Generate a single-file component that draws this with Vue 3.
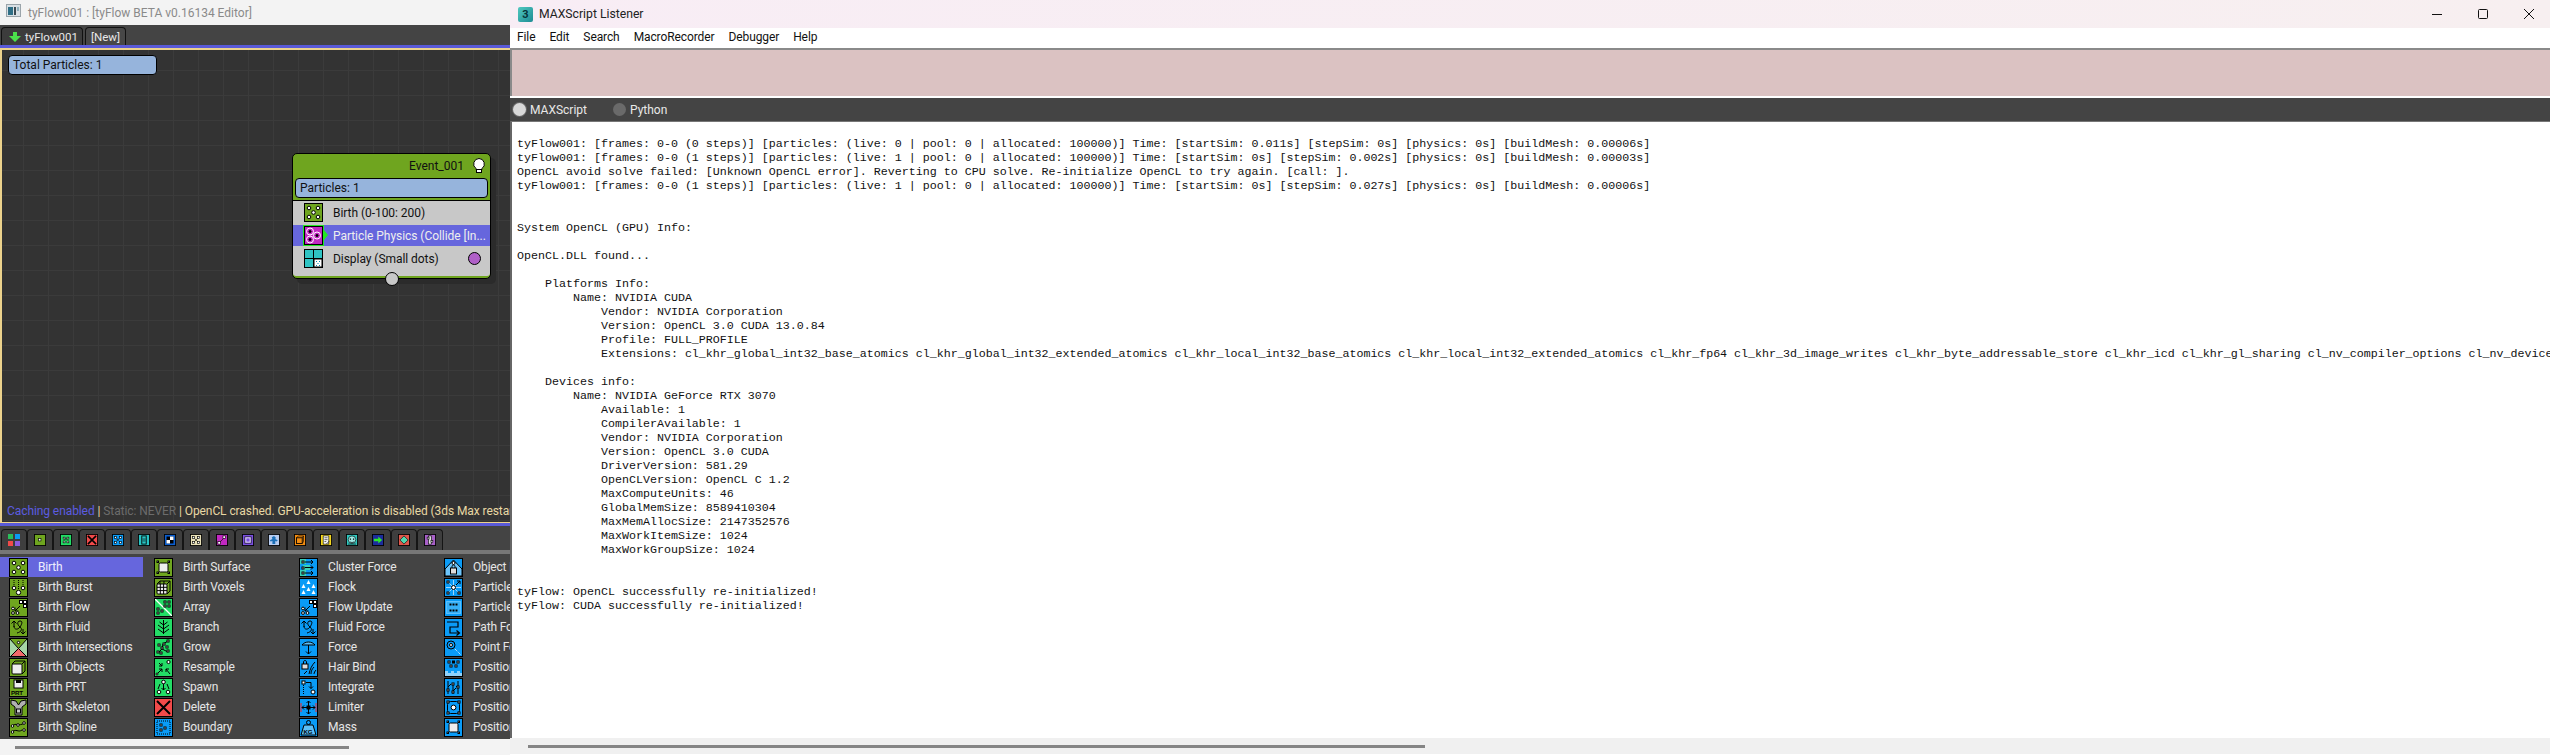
<script setup>
const o = (x, y, r = 1.8, f = '#fff') => `<circle cx="${x}" cy="${y}" r="${r}" fill="${f}" stroke="#000"/>`
const sq = (x, y, s = 3, f = '#fff') => `<rect x="${x}" y="${y}" width="${s}" height="${s}" fill="${f}" stroke="#000"/>`
const ln = (d, c = '#000', w = 1) => `<path d="${d}" fill="none" stroke="${c}" stroke-width="${w}"/>`
const fl = (d, c = '#000') => `<path d="${d}" fill="${c}"/>`
const tx = (x, y, t, c = '#000', s = 6) => `<text x="${x}" y="${y}" font-size="${s}" font-weight="700" font-family="Liberation Sans, sans-serif" fill="${c}">${t}</text>`

const G = '#6fa51f', E = '#23dc66', B = '#0a9bf6', W = '#fff'
const flowMark = sq(10.5, 2.5) + sq(14.5, 2.5) + sq(14.5, 6.5) + ln('M11 8L6 13M6 9.5V13H9.5') + o(4, 10.5, 1.4) + o(4, 15, 1.4) + o(8.5, 15, 1.4)
const fluidMark = ln('M5 3V9M2.5 5.5L5 3l2.5 2.5M14 16v-5M11.5 13.5L14 16l2.5-2.5') + ln('M5 8c0 4 4 4 6 1s3-6 0-6-3 4 0 6 1 5-3 6', '#000', 1)
const cube = `<rect x="3" y="6" width="10" height="10" rx="1" fill="#eee" stroke="#000"/>` + ln('M3 6l3-3h10v10l-3 3M13 6l3-3', '#000')
const surface = sq(3, 3, 1.5) + sq(14, 3, 1.5) + sq(3, 14, 1.5) + sq(14, 14, 1.5) + `<rect x="5" y="5" width="9" height="9" rx="1.5" fill="#eee" stroke="#000"/>`

const frame = (bg, body) => `<rect x=".5" y=".5" width="18" height="18" fill="${bg}" stroke="#000"/>${body}<rect x=".5" y=".5" width="18" height="18" fill="none" stroke="#000"/>`

const columns = [
  [
    ['Birth', frame(G, o(5, 5) + o(14, 5) + o(9.5, 9.5) + o(5, 14) + o(14, 14))],
    ['Birth Burst', frame(G, ln('M5 2v6M9.5 2v9M14 2v6', '#000', 1).replace('<path', '<path stroke-dasharray="1 1"') + o(5, 10) + o(14, 10) + o(9.5, 14.5, 2.2))],
    ['Birth Flow', frame(G, flowMark)],
    ['Birth Fluid', frame(G, fluidMark)],
    ['Birth Intersections', frame('#a6d6a6', fl('M1 1h17L9.5 10z', G) + fl('M9.5 10L17 18H2z', '#f26a6a') + ln('M1 1l8.5 9.5L18 1M2 18l7.5-7.5L17 18') + o(9.5, 4.5, 1.2))],
    ['Birth Objects', frame(G, cube)],
    ['Birth PRT', frame(G, `<rect x="5" y="2" width="9" height="8" fill="#eee" stroke="#000"/><rect x="7" y="2" width="5" height="3" fill="#000"/>` + tx(2, 17, 'PRT', '#000', 6.2))],
    ['Birth Skeleton', frame(G, `<path d="M2 2l5 1 2.5 4 2.5-4 5-1v4l-4 3v8H6V9L2 6z" fill="#b0b0b0" stroke="#000"/>` + sq(7.5, 11, 4, '#ccc'))],
    ['Birth Spline', frame(G, ln('M3 14c4-4 6 1 10-2M3 8c4-4 6 1 13-3') + o(3.5, 8, 1.3) + o(15, 5, 1.3) + o(9, 7, 1.3) + o(3.5, 14, 1.3) + o(15, 12, 1.3))]
  ],
  [
    ['Birth Surface', frame(G, surface)],
    ['Birth Voxels', frame(G, cube + ln('M3 9.3h10M3 12.6h10M6.3 6v10M9.6 6v10M6 3l-.1 3M10 3l-.1 3'))],
    ['Array', frame(E, ln('M1 1l17 17', W, 1.2) + sq(10, 3, 2) + sq(14, 3, 2) + sq(14, 7, 2) + sq(10, 7, 2) + sq(3, 10, 2) + sq(7, 12, 2) + sq(3, 14, 2))],
    ['Branch', frame(E, ln('M9.5 2v14M9.5 7l-4-3M9.5 7l4-3M9.5 11L4 7M9.5 11l5.5-4M9.5 15L4 11M9.5 15l5.5-4'))],
    ['Grow', frame(E, ln('M4 15l4-4 1-5 5-3M8 11l6 3', '#000') + sq(3, 13, 2) + sq(7, 9, 2) + sq(9, 5, 2) + sq(13, 2, 2) + sq(13, 12, 2) + sq(12, 8, 2) + sq(6, 14, 2) + sq(4, 6, 2))],
    ['Resample', frame(E, ln('M3 16L8 11M8 11H5M8 11v3M16 16l-4-5M12 11h3M12 11v3M5 5l3 3M8 5v3H5') + o(14.5, 4, 1.6) + o(3, 16, 1))],
    ['Spawn', frame(E, ln('M6 6l-2 5M13 6l2 5M9.5 3v9M7.5 10l2 2 2-2') + o(9.5, 4) + o(5, 14) + o(14, 14))],
    ['Delete', frame('#f24a4a', ln('M3 3l13 13M16 3L3 16', '#000', 2))],
    ['Boundary', frame(B, `<rect x="3" y="3" width="13" height="13" fill="none" stroke="#000" stroke-dasharray="1 1"/>` + sq(6, 6, 2) + sq(10, 9, 2) + sq(6, 11, 2))]
  ],
  [
    ['Cluster Force', frame(B, fl('M1 1h6v5H1zM1 12h6v6H1z', '#3ad0b8') + fl('M4 7h7v5H4z', '#3ad0b8') + ln('M6 4h8M12 2l2 2-2 2M6 9.5h8M12 7.5l2 2-2 2M6 15h8M12 13l2 2-2 2') + sq(3, 3, 2) + sq(3, 9, 2) + sq(3, 14, 2))],
    ['Flock', frame(B, fl('M9.5 2l2 4h-4zM4.5 6l2 4h-4zM14.5 6l2 4h-4zM9.5 9l2 4h-4zM4.5 12l2 4h-4zM14.5 12l2 4h-4z', W))],
    ['Flow Update', frame(B, flowMark)],
    ['Fluid Force', frame(B, fluidMark)],
    ['Force', frame(B, ln('M9.5 5v11M7 13.5l2.5 2.5 2.5-2.5') + `<path d="M3 7c3-4 10-4 13 0z" fill="#5cc0f8" stroke="#000"/>`)],
    ['Hair Bind', frame(B, `<rect x="3" y="6" width="6" height="5" fill="#ddd" stroke="#000"/>` + ln('M4.5 6V4c0-2 3-2 3 0v2M16 4c-3 3-5 7-6 12M15 9c-2 2-3 4-3 7M17 12c-1 1-2 3-2 4M5 16l3-3'))],
    ['Integrate', frame(B, sq(3, 3, 3) + o(14, 14, 2) + ln('M7 4.5h5v6M10 8.5l2 2 2-2') + `<path d="M4.5 7v10" stroke="#000" stroke-dasharray="1 1"/>`)],
    ['Limiter', frame(B, ln('M2 5v9M17 5v9', '#f22', 1) + ln('M9.5 3v13M3 9.5h13M7.5 5l2-2 2 2M7.5 14l2 2 2-2M5 7.5l-2 2 2 2M14 7.5l2 2-2 2') + sq(8, 8, 3, '#000'))],
    ['Mass', frame(B, `<path d="M5 7h9l3 10H2z" fill="#5cc0f8" stroke="#000"/><circle cx="9.5" cy="4.5" r="2" fill="none" stroke="#000"/>` + tx(4.5, 15.5, 'KG', '#000', 6.2))]
  ],
  [
    ['Object Bind', frame(B, `<path d="M9.5 2L18 11v7H1v-7z" fill="#6cc4fa" stroke="#000"/>` + o(9.5, 5, 1.5) + `<rect x="6.5" y="10" width="6" height="6" fill="#ddd" stroke="#000"/>` + ln('M8 10V8.5c0-2 3-2 3 0V10'))],
    ['Particle Bind', frame(B, ln('M3 3l13 13M16 3L3 16M9.5 2v15M2 9.5h15', '#fff', .6) + ln('M12 7l4-4M13 3h3v3') + o(9.5, 9.5, 2) + sq(3, 3, 2) + sq(3, 14, 2) + sq(14, 14, 2))],
    ['Particle Break', frame(B, `<rect x="2.5" y="3.5" width="14" height="12" fill="#36b0f8" stroke="#9ad8ff" stroke-dasharray="1 1"/>` + sq(6, 6, 1) + sq(9, 6, 1) + sq(12, 6, 1) + sq(6, 12, 1) + sq(9, 12, 1) + sq(12, 12, 1))],
    ['Path Follow', frame(B, ln('M3 4h11v5H6v6h9M12.5 12.5l3 2.5-3 2.5', '#000', 1.2))],
    ['Point Force', frame(B, o(7, 7, 4, B) + o(7, 7, 1.5) + `<path d="M11 11l6 6" stroke="#fff" stroke-dasharray="1 1"/>`)],
    ['Position Icon', frame(B, sq(4, 3, 2) + sq(8.5, 3, 2) + sq(13, 3, 2) + sq(6, 7, 2) + sq(11, 7, 2) + `<path d="M1 13h3v2h3v-2h3v2h3v-2h3v2h2v3H1z" fill="#fff" opacity=".55"/>`)],
    ['Position Object', frame(B, ln('M4 16V3M9 16V7M14 16V3M4 9l3-3M9 13l3-3M14 10l-2-2') + sq(3, 11, 2) + sq(8, 5, 2) + sq(13, 8, 2) + sq(8, 13, 2))],
    ['Position Raycast', frame(B, `<rect x="3.5" y="3.5" width="12" height="12" rx="3" fill="none" stroke="#000"/>` + o(9.5, 9.5, 2.4) + sq(3, 3, 2) + sq(14, 3, 2) + sq(3, 14, 2) + sq(14, 14, 2))],
    ['Position Transfer', frame(B, surface)]
  ]
]
const rows = columns.flat()

const tabIcons = [
  { bare: true, inner: `<rect x="0" y="0" width="5" height="5" fill="#2bbf5b"/><rect x="7" y="0" width="5" height="5" fill="#0a9bf6"/><rect x="0" y="7" width="5" height="5" fill="#f24a4a"/><rect x="7" y="7" width="5" height="5" fill="#8a5ce0"/>` },
  { inner: frame(G, sq(7, 7, 4)) },
  { inner: frame(E, sq(5, 5, 3) + sq(11, 5, 3) + sq(5, 11, 3) + sq(11, 11, 3) + ln('M7 8h5')) },
  { inner: frame('#f24a4a', ln('M3 3l13 13M16 3L3 16', '#000', 2.5)) },
  { inner: frame(B, sq(4, 4, 3) + sq(12, 4, 3) + sq(4, 12, 3) + sq(12, 12, 3) + sq(8, 8, 2)) },
  { inner: frame('#29c4c4', `<rect x="6" y="3" width="7" height="13" fill="none" stroke="#000" stroke-width="1.4"/>` + ln('M7 8h5M7 11h5')) },
  { inner: frame('#0a5ed0', `<rect x="4" y="4" width="11" height="11" fill="#000"/><rect x="9.5" y="4" width="5.5" height="5.5" fill="#fff"/><rect x="4" y="9.5" width="5.5" height="5.5" fill="#fff"/>`) },
  { inner: frame('#e8e0b8', ln('M5 5l9 9M14 5l-9 9') + sq(4, 4, 3) + sq(12, 4, 3) + sq(4, 12, 3) + sq(12, 12, 3)) },
  { inner: frame('#c228c2', ln('M5 14L14 5', '#000') + sq(3, 12, 4) + sq(11, 3, 4)) },
  { inner: frame('#7a4fe0', `<rect x="4.5" y="4.5" width="10" height="10" fill="#d8c8ff" stroke="#000"/><rect x="7" y="7" width="5" height="5" fill="#7a4fe0"/>`) },
  { inner: frame('#b8ccf0', `<path d="M9.5 3l3 3-1 2 4 2-2 2-2-1v5H7v-5l-3 1-1-2 4-2-1-3z" fill="#1d70b8"/>`) },
  { inner: frame('#f28c10', `<rect x="4" y="6" width="9" height="9" fill="none" stroke="#000" stroke-width="1.4"/>` + ln('M4 6l3-3h8v9l-2 3M13 6l2-3')) },
  { inner: frame('#f5d820', `<rect x="5" y="3" width="9" height="13" fill="#fff" stroke="#000"/>` + ln('M7 6h5M7 9h5M7 12h3M10 16l5-5')) },
  { inner: frame('#30c8c0', `<circle cx="9.5" cy="9" r="6" fill="#a0ece8" stroke="#000"/>` + fl('M6 7h2v2H6zM11 7h2v2h-2z') + ln('M6 12c2 2 5 2 7 0M3 16h13')) },
  { inner: frame('#1c2c9c', fl('M3 7.5h7V4l6 5.5-6 5.5v-3.5H3z', '#2ee82e')) },
  { inner: frame('#e0584c', `<path d="M9.5 3l6.5 6.5-6.5 6.5-6.5-6.5z" fill="#50d8b0" stroke="#000"/>`) },
  { inner: frame('#a860c8', `<rect x="7" y="3" width="5" height="13" fill="#ddd" stroke="#000"/>` + sq(5, 5, 3) + sq(11, 10, 3)) }
]

const ext = 'cl_khr_global_int32_base_atomics cl_khr_global_int32_extended_atomics cl_khr_local_int32_base_atomics cl_khr_local_int32_extended_atomics cl_khr_fp64 cl_khr_3d_image_writes cl_khr_byte_addressable_store cl_khr_icd cl_khr_gl_sharing cl_nv_compiler_options cl_nv_device_attribute_query'

const log = [
  'tyFlow001: [frames: 0-0 (0 steps)] [particles: (live: 0 | pool: 0 | allocated: 100000)] Time: [startSim: 0.011s] [stepSim: 0s] [physics: 0s] [buildMesh: 0.00006s]',
  'tyFlow001: [frames: 0-0 (1 steps)] [particles: (live: 1 | pool: 0 | allocated: 100000)] Time: [startSim: 0s] [stepSim: 0.002s] [physics: 0s] [buildMesh: 0.00003s]',
  'OpenCL avoid solve failed: [Unknown OpenCL error]. Reverting to CPU solve. Re-initialize OpenCL to try again. [call: ].',
  'tyFlow001: [frames: 0-0 (1 steps)] [particles: (live: 1 | pool: 0 | allocated: 100000)] Time: [startSim: 0s] [stepSim: 0.027s] [physics: 0s] [buildMesh: 0.00006s]',
  '', '',
  'System OpenCL (GPU) Info:',
  '',
  'OpenCL.DLL found...',
  '',
  '    Platforms Info:',
  '        Name: NVIDIA CUDA',
  '            Vendor: NVIDIA Corporation',
  '            Version: OpenCL 3.0 CUDA 13.0.84',
  '            Profile: FULL_PROFILE',
  '            Extensions: ' + ext,
  '',
  '    Devices info:',
  '        Name: NVIDIA GeForce RTX 3070',
  '            Available: 1',
  '            CompilerAvailable: 1',
  '            Vendor: NVIDIA Corporation',
  '            Version: OpenCL 3.0 CUDA',
  '            DriverVersion: 581.29',
  '            OpenCLVersion: OpenCL C 1.2',
  '            MaxComputeUnits: 46',
  '            GlobalMemSize: 8589410304',
  '            MaxMemAllocSize: 2147352576',
  '            MaxWorkItemSize: 1024',
  '            MaxWorkGroupSize: 1024',
  '', '',
  'tyFlow: OpenCL successfully re-initialized!',
  'tyFlow: CUDA successfully re-initialized!'
].join('\n')

const menus = ['File', 'Edit', 'Search', 'MacroRecorder', 'Debugger', 'Help']
const operators = [
  { name: 'Birth (0-100: 200)', inner: columns[0][0][1] },
  { name: 'Particle Physics (Collide [In...', selected: true, inner: frame('#c228c2', `<circle cx="6" cy="5.5" r="3.5" fill="none" stroke="#fff"/><circle cx="6" cy="13.5" r="3.5" fill="none" stroke="#fff"/><circle cx="13" cy="9.5" r="3.5" fill="none" stroke="#fff"/>` + o(6, 5.5, 1, '#000') + o(6, 13.5, 1, '#000') + o(13, 9.5, 1, '#000')) },
  { name: 'Display (Small dots)', dot: true, inner: frame('#2fc4c4', ln('M9.5 1v17M1 9.5h17') + `<rect x="10" y="10" width="8" height="8" fill="#fff" stroke="#000"/><rect x="12" y="12" width="1" height="1" fill="#08a"/><rect x="15" y="12" width="1" height="1" fill="#08a"/><rect x="13.5" y="14" width="1" height="1" fill="#08a"/><rect x="12" y="16" width="1" height="1" fill="#08a"/><rect x="15" y="16" width="1" height="1" fill="#08a"/>`) }
]
</script>

<template>
  <div class="desk">
    <section class="editor">
      <header class="etitle">
        <svg class="eicon" viewBox="0 0 15 13">
          <rect x=".5" y=".5" width="14" height="12" fill="#d8dfe4" stroke="#9aa4aa"/>
          <rect x="2" y="3" width="5" height="8" fill="#2f6f86"/>
          <rect x="8" y="3" width="2" height="8" fill="#3b4a52"/>
          <rect x="11" y="3" width="2" height="4" fill="#8fb0bc"/>
        </svg>
        <span>tyFlow001 : [tyFlow BETA v0.16134 Editor]</span>
      </header>

      <nav class="etabs">
        <div class="etab first">
          <svg class="arrow" viewBox="0 0 12 10"><path d="M4 0h4v4h4L6 10 0 4h4z" fill="#4be24b"/></svg>
          <span>tyFlow001</span>
        </div>
        <div class="etab second"><span>[New]</span></div>
      </nav>

      <div class="canvas">
        <div class="total">Total Particles: 1</div>

        <div class="node">
          <div class="nhead">
            <span class="ntitle">Event_001</span>
            <svg class="bulb" viewBox="0 0 12 15">
              <path d="M6 .5a5.5 5.5 0 0 1 3 10v1H3v-1a5.5 5.5 0 0 1 3-10z" fill="#fff" stroke="#000"/>
              <rect x="3.5" y="11.5" width="5" height="3" fill="#fff" stroke="#000"/>
            </svg>
          </div>
          <div class="nbar">Particles: 1</div>
          <div class="nrows">
            <div v-for="op in operators" :key="op.name" class="nrow" :class="{ sel: op.selected }">
              <svg class="nicon" viewBox="0 0 19 19" v-html="op.inner"></svg>
              <span class="nname">{{ op.name }}</span>
              <i v-if="op.selected" class="ntri"></i>
              <i v-if="op.dot" class="ndot"></i>
            </div>
          </div>
          <i class="nport"></i>
        </div>

        <div class="status"><span class="s1">Caching enabled</span> <span class="s2">|</span> <span class="s3">Static: NEVER</span> <span class="s4">| OpenCL crashed. GPU-acceleration is disabled (3ds Max restart required)</span></div>
      </div>

      <div class="tools">
        <div v-for="(t, i) in tabIcons" :key="i" class="tool">
          <svg class="ticon" :viewBox="t.bare ? '0 0 12 12' : '0 0 19 19'" v-html="t.inner"></svg>
        </div>
      </div>

      <div class="ops">
        <div v-for="(r, i) in rows" :key="r[0]" class="op" :class="{ on: i === 0 }">
          <svg class="oicon" viewBox="0 0 19 19" v-html="r[1]"></svg>
          <span class="oname">{{ r[0] }}</span>
        </div>
      </div>

      <div class="hbar left"><i></i></div>
    </section>

    <section class="listener">
      <header class="ltitle">
        <div class="lbrand">
          <span class="maxicon">3</span>
          <span>MAXScript Listener</span>
        </div>
        <div class="wbtns">
          <svg viewBox="0 0 12 12"><path d="M1 6.5h10" stroke="#111" fill="none"/></svg>
          <svg viewBox="0 0 12 12"><rect x="1.5" y="1.5" width="9" height="9" rx="1" fill="none" stroke="#111"/></svg>
          <svg viewBox="0 0 12 12"><path d="M1 1l10 10M11 1L1 11" stroke="#111" fill="none"/></svg>
        </div>
      </header>
      <nav class="menu"><span v-for="m in menus" :key="m">{{ m }}</span></nav>
      <div class="macro"></div>
      <div class="radios">
        <label class="radio"><i class="dot on"></i>MAXScript</label>
        <label class="radio"><i class="dot"></i>Python</label>
      </div>
      <pre class="log">{{ log }}</pre>
      <div class="hbar right"><i></i></div>
    </section>
  </div>
</template>

<style>
html, body { margin: 0; background: #fff; overflow: hidden; }
</style>

<style scoped>
.desk {
  display: flex;
  width: 2550px;
  height: 755px;
  overflow: hidden;
  font-family: Roboto, "Noto Sans", sans-serif;
  font-size: 12px;
}
i { display: block; }
svg { display: block; flex: none; }

/* editor */
.editor {
  width: 510px;
  flex: none;
  display: flex;
  flex-direction: column;
  overflow: hidden;
  background: #444;
}
.etitle {
  height: 25px;
  flex: none;
  background: #f3f3f3;
  color: #8a8a8a;
  display: flex;
  align-items: center;
  gap: 7px;
  padding-left: 6px;
  font-size: 12px;
}
.eicon { width: 15px; height: 13px; margin-bottom: 4px; }
.etabs {
  height: 20px;
  flex: none;
  display: flex;
  align-items: flex-end;
  gap: 2px;
  padding-left: 1px;
  background: #444;
  box-sizing: border-box;
  font-size: 11.5px;
}
.etab {
  height: 18px;
  box-sizing: border-box;
  border: 1px solid #111;
  border-bottom: 0;
  border-radius: 4px 4px 0 0;
  display: flex;
  align-items: center;
  color: #e8e8e8;
}
.etab.first { width: 82px; background: #3c3c3c; padding-left: 7px; gap: 4px; }
.etab.second { width: 41px; background: #474747; padding-left: 5px; }
.arrow { width: 12px; height: 10px; }
.canvas {
  height: 481px;
  flex: none;
  box-sizing: border-box;
  position: relative;
  border-top: 3px solid #5a5ad8;
  border-bottom: 3px solid #5a5ad8;
  background-color: #333;
  background-image:
    linear-gradient(#3b3b3b 1px, transparent 1px),
    linear-gradient(90deg, #3b3b3b 1px, transparent 1px);
  background-size: 25px 25px;
  background-position: 23px 22px;
  box-shadow: inset 2px 2px 0 #ecd28c, inset 0 -1px 0 #ecd28c;
  display: flex;
  flex-direction: column;
}
.total {
  margin: 7px 0 0 8px;
  width: 149px;
  height: 20px;
  box-sizing: border-box;
  background: #96b4dc;
  border: 1px solid #000;
  border-radius: 4px;
  color: #111;
  line-height: 18px;
  padding-left: 4px;
}
.node {
  position: absolute;
  left: 292px;
  top: 105px;
  width: 199px;
  height: 126px;
  box-sizing: border-box;
  background: #6fa51f;
  border: 1px solid #000;
  border-radius: 5px;
  box-shadow: 5px 5px 0 #2b2b2b;
  display: flex;
  flex-direction: column;
}
.nhead {
  height: 23px;
  flex: none;
  display: flex;
  align-items: center;
  justify-content: flex-end;
  gap: 9px;
  padding-right: 5px;
  color: #111;
}
.bulb { width: 12px; height: 15px; }
.nbar {
  height: 20px;
  flex: none;
  margin: 1px 2px 2px;
  box-sizing: border-box;
  background: #96b4dc;
  border: 1px solid #000;
  border-radius: 4px;
  color: #111;
  line-height: 18px;
  padding-left: 4px;
}
.nrows {
  flex: 1;
  background: #c8c8c8;
  border-top: 1px solid #000;
  border-radius: 0 0 3px 3px;
  padding-top: 1px;
  margin-bottom: 2px;
  color: #111;
}
.nrow {
  height: 21px;
  margin-bottom: 2px;
  display: flex;
  align-items: center;
  padding-left: 11px;
  gap: 10px;
  position: relative;
  letter-spacing: -.05px;
}
.nrow.sel { background: #6666dd; color: #eee; }
.nrow.sel .nicon { outline: 1px solid #22e822; }
.nicon { width: 19px; height: 19px; }
.nname { white-space: nowrap; }
.ntri {
  position: absolute;
  left: 31px;
  top: 5px;
  width: 0;
  height: 0;
  border-left: 4px solid #22e822;
  border-top: 5px solid transparent;
  border-bottom: 5px solid transparent;
}
.ndot {
  position: absolute;
  left: 175px;
  top: 4px;
  width: 13px;
  height: 13px;
  box-sizing: border-box;
  border-radius: 50%;
  background: #b060c8;
  border: 1px solid #000;
}
.nport {
  position: absolute;
  left: 92px;
  bottom: -8px;
  width: 14px;
  height: 14px;
  box-sizing: border-box;
  border-radius: 50%;
  background: #c8c8c8;
  border: 1px solid #000;
}
.status {
  margin-top: auto;
  margin-bottom: 4px;
  margin-left: 7px;
  height: 16px;
  line-height: 16px;
  white-space: nowrap;
  color: #e8d8a4;
  font-size: 12px;
  letter-spacing: -.08px;
  overflow: hidden;
}
.s1 { color: #5c5ce0; }
.s2 { color: #e8d8a4; }
.s3 { color: #6c6c6c; }
.tools {
  height: 24px;
  flex: none;
  box-sizing: border-box;
  display: flex;
  align-items: flex-end;
  padding-left: 1px;
  background: #444;
}
.tool {
  width: 26px;
  height: 21px;
  box-sizing: border-box;
  background: #3e3e3e;
  border: 1px solid #151515;
  border-bottom: 0;
  border-radius: 4px 4px 0 0;
  display: flex;
  align-items: center;
  justify-content: center;
}
.ticon { width: 12px; height: 12px; }
.ops {
  height: 189px;
  flex: none;
  box-sizing: border-box;
  border-top: 4px solid #777;
  padding-top: 3px;
  background: #444;
  display: grid;
  grid-auto-flow: column;
  grid-template-rows: repeat(9, 20px);
  grid-template-columns: 145px 145px 145px 75px;
  color: #e6e6e6;
  overflow: hidden;
}
.op {
  display: flex;
  align-items: center;
  gap: 10px;
  padding-left: 9px;
  margin-right: 2px;
  white-space: nowrap;
  letter-spacing: -.18px;
  min-width: 0;
}
.oname { flex: 1; min-width: 0; overflow: hidden; }
.op:nth-child(n+28) { margin-right: 0; }
.op.on { background: #6666dd; color: #eef; }
.oicon { width: 19px; height: 19px; }
.hbar {
  flex: none;
  background: #f0f0f0;
  display: flex;
  align-items: center;
}
.hbar i { height: 3px; background: #858585; }
.hbar.left { height: 16px; background: #f3f3f3; padding-left: 15px; }
.hbar.left i { width: 334px; }
.hbar.right { height: 16px; padding-left: 18px; margin-bottom: 1px; }
.hbar.right i { width: 897px; }

/* listener */
.listener {
  flex: 1;
  min-width: 0;
  display: flex;
  flex-direction: column;
  overflow: hidden;
  background: #fff;
}
.ltitle {
  height: 28px;
  flex: none;
  background: linear-gradient(90deg, #f8edf5, #f7eff0);
  display: flex;
  align-items: center;
  justify-content: space-between;
  color: #222;
  padding-left: 8px;
}
.lbrand { display: flex; align-items: center; gap: 6px; font-size: 12.2px; }
.maxicon {
  width: 15px;
  height: 15px;
  border-radius: 2px;
  background: linear-gradient(135deg, #52c8c0, #1d8c94);
  color: #06343a;
  font-weight: 700;
  font-size: 11px;
  line-height: 15px;
  text-align: center;
}
.wbtns { display: flex; gap: 34px; padding-right: 15px; }
.wbtns svg { width: 12px; height: 12px; }
.menu {
  height: 18px;
  flex: none;
  display: flex;
  align-items: center;
  padding-left: 7px;
  gap: 14px;
  color: #111;
  font-size: 12px;
  letter-spacing: -.1px;
  background: #fff;
}
.macro {
  height: 48px;
  flex: none;
  margin-top: 2px;
  box-sizing: border-box;
  background: #dbc2c2;
  border-top: 2px solid #8a8a8a;
  border-left: 2px solid #8a8a8a;
}
.radios {
  height: 23px;
  flex: none;
  margin-top: 2px;
  background: #444;
  display: flex;
  align-items: center;
  padding-left: 3px;
  color: #e8e8e8;
}
.radio { display: flex; align-items: center; gap: 4px; width: 100px; }
.dot {
  width: 13px;
  height: 13px;
  border-radius: 50%;
  background: #6a6a6a;
}
.dot.on { background: #d8d8d8; box-shadow: 0 0 0 1px #666; }
.log {
  flex: 1;
  min-height: 0;
  margin: 0;
  box-sizing: border-box;
  padding: 15px 0 0 5px;
  border-top: 1px solid #777;
  border-left: 2px solid #666;
  font-family: "Liberation Mono", "DejaVu Sans Mono", monospace;
  font-size: 11.67px;
  line-height: 14px;
  color: #111;
  white-space: pre;
  overflow: hidden;
}
</style>
